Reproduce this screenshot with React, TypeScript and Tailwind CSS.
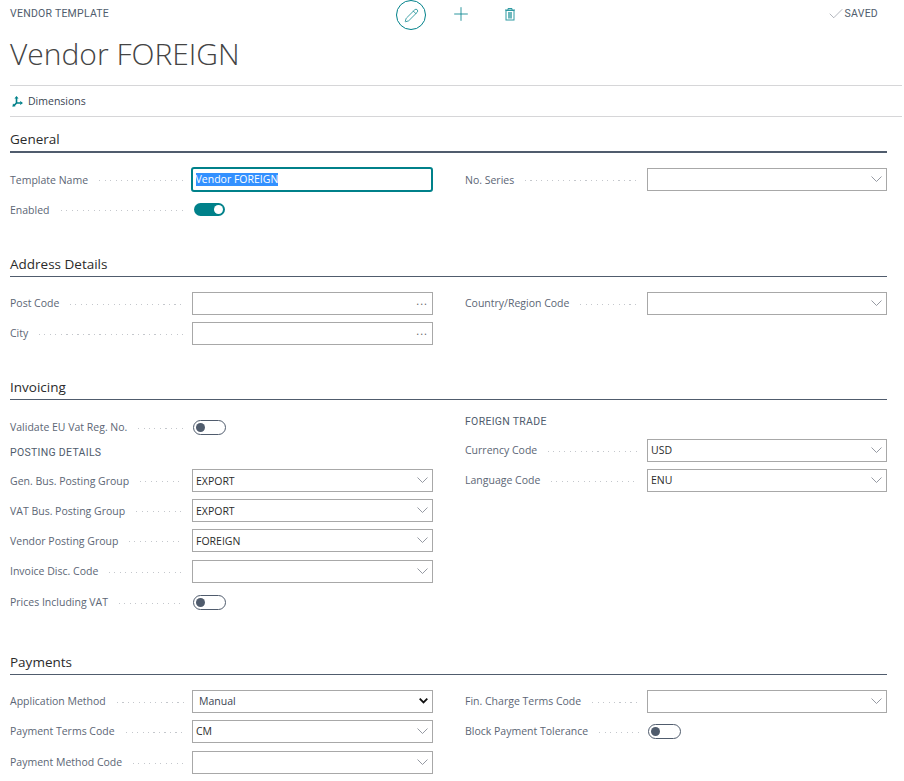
import React from "react";
import { Pencil, Plus, Check } from "lucide-react";

function Leader() {
  return <span className="flex-1 h-px ml-[11px] mr-[8px] mt-[3px] bg-[repeating-linear-gradient(90deg,#c4c7cc_0,#c4c7cc_1px,transparent_1px,transparent_5.5px)]" />;
}

function Row({ label, h = "h-[30px]", low, children }: { label: string; h?: string; low?: boolean; children: React.ReactNode }) {
  return (
    <div className={`flex items-center ${h}`}>
      <div className="flex items-center w-[182px] text-[#5c6675] whitespace-nowrap">
        <span className={low ? "pt-[4px]" : "pt-[2px]"}>{label}</span>
        <Leader />
      </div>
      {children}
    </div>
  );
}

function Thin() {
  return (
    <svg width="11" height="6" viewBox="0 0 11 6" fill="none">
      <path d="M0.5 0.5 5.5 5.5 10.5 0.5" stroke="#8a8f98" strokeWidth="0.9" />
    </svg>
  );
}

function Box({ value, kind, wide, low }: { value?: string; kind: "drop" | "more" | "none"; wide?: boolean; low?: boolean }) {
  return (
    <div className={`flex items-center justify-between h-[23px] border border-[#a8a8a8] pl-[3px] pr-[4px] text-[#2b2b2b] ${wide ? "w-[240px]" : "w-[241px]"}`}>
      <span className={low ? "pt-[4px]" : "pt-[2px]"}>{value}</span>
      {kind === "drop" && <Thin />}
      {kind === "more" && <span className="text-[#666] text-[11px] tracking-[1px] leading-none -mt-[5px]">...</span>}
    </div>
  );
}

function Toggle({ on }: { on?: boolean }) {
  return on ? (
    <div className="ml-[2px] flex items-center justify-end w-[31px] h-[13px] rounded-full bg-[#00818a] pr-[2px]">
      <span className="w-[9px] h-[9px] rounded-full bg-white" />
    </div>
  ) : (
    <div className="ml-[1px] flex items-center w-[33px] h-[15px] rounded-full border border-[#505c6d] pl-[2px] bg-white">
      <span className="w-[9px] h-[9px] rounded-full bg-[#505c6d]" />
    </div>
  );
}

function SectionTitle({ title, thick, mt }: { title: string; thick?: boolean; mt: string }) {
  return (
    <div className={`${mt} mr-[17px] flex items-end h-[26px] pb-[2px] text-[#2b2b2b] text-[13.5px] font-medium ${thick ? "border-b-2 border-[#505c6d]" : "border-b border-[#505c6d]"}`}>
      {title}
    </div>
  );
}

function SubHead({ children, h }: { children: React.ReactNode; h: string }) {
  return <div className={`flex items-center ${h} text-[10.5px] text-[#505c6d] tracking-[0.3px] [font-family:Roboto,sans-serif]`}>{children}</div>;
}

function Columns({ left, right }: { left: React.ReactNode; right: React.ReactNode }) {
  return (
    <div className="flex mr-[17px]">
      <div className="w-[423px] shrink-0">{left}</div>
      <div className="ml-[32px] flex-1">{right}</div>
    </div>
  );
}

export default function App() {
  return (
    <div className="w-[904px] h-[781px] overflow-hidden bg-white pl-[10px] pr-0 text-[10.5px] [font-family:'Open_Sans','Noto_Sans',sans-serif]">
      <div className="flex items-center h-[27px] mr-[26px] text-[#505c6d] [font-family:Roboto,sans-serif] text-[10.5px] tracking-[0.25px]">
        <span className="w-[386px]">VENDOR TEMPLATE</span>
        <span className="flex items-center justify-center w-[30px] h-[30px] mt-[3px] rounded-full border border-[#00818a] text-[#00818a]">
          <Pencil size={15} strokeWidth={1.2} />
        </span>
        <Plus size={22} strokeWidth={0.9} className="ml-[24px] text-[#00818a]" />
        <svg width="12" height="14" viewBox="0 0 12 14" className="ml-[32px]" fill="none">
          <path d="M1 3h10M4 3V1.5h4V3" stroke="#2e9aa2" strokeWidth="1" />
          <rect x="2" y="3.5" width="8" height="9.5" stroke="#2e9aa2" strokeWidth="1" />
          <rect x="4" y="5" width="4" height="6.5" fill="#6db8bd" />
        </svg>
        <span className="ml-auto flex items-center">
          <Check size={18} strokeWidth={0.7} className="text-[#6b7380]" />
          SAVED
        </span>
      </div>

      <div className="h-[58px] flex items-center text-[30px] leading-none font-light text-[#444] [font-family:'Open_Sans',sans-serif] pb-[4px]">
        Vendor FOREIGN
      </div>

      <div className="border-t border-b border-[#d6d6d8] mr-[2px] h-[32px] flex items-center gap-[5px] text-[#505c6d]">
        <svg width="11" height="11" viewBox="0 0 11 11" className="ml-[2px]" fill="none">
          <path d="M4.5 2v5.5M4.5 7h4M4.5 7 2 9.6" stroke="#00818a" strokeWidth="1.6" />
          <path d="M4.5 0 6.6 2.6H2.4ZM11 7 8.2 9V5ZM0.4 10.8l.6-3.2 2.6 2.6Z" fill="#00818a" />
        </svg>
        <span className="text-[#3a4452] pt-[1px]">Dimensions</span>
      </div>

      <SectionTitle title="General" thick mt="mt-[10px]" />
      <div className="mt-[11px]">
        <Columns
          left={
            <>
              <Row label="Template Name" low>
                <div className="flex items-center w-[243px] h-[25px] -ml-[1px] border-2 border-[#00818a] rounded-[3px] pl-[3px]">
                  <span className="bg-[#3390ff] text-white leading-[13px]">Vendor FOREIGN</span>
                </div>
              </Row>
              <Row label="Enabled" low><Toggle on /></Row>
            </>
          }
          right={<Row label="No. Series" low><Box kind="drop" wide /></Row>}
        />
      </div>

      <SectionTitle title="Address Details" mt="mt-[27px]" />
      <div className="mt-[11px]">
        <Columns
          left={
            <>
              <Row label="Post Code"><Box kind="more" /></Row>
              <Row label="City"><Box kind="more" /></Row>
            </>
          }
          right={<Row label="Country/Region Code"><Box kind="drop" wide /></Row>}
        />
      </div>

      <SectionTitle title="Invoicing" mt="mt-[26px]" />
      <div className="mt-[12px]">
        <Columns
          left={
            <>
              <Row label="Validate EU Vat Reg. No."><Toggle /></Row>
              <SubHead h="h-[23px] pb-[2px]">POSTING DETAILS</SubHead>
              <Row label="Gen. Bus. Posting Group" low><Box kind="drop" value="EXPORT" low /></Row>
              <Row label="VAT Bus. Posting Group" low><Box kind="drop" value="EXPORT" low /></Row>
              <Row label="Vendor Posting Group" low><Box kind="drop" value="FOREIGN" low /></Row>
              <Row label="Invoice Disc. Code" h="h-[30px] mt-[1px]"><Box kind="drop" /></Row>
              <Row label="Prices Including VAT" h="h-[30px] mt-[1px]"><Toggle /></Row>
            </>
          }
          right={
            <>
              <SubHead h="h-[20px] mb-[3px]">FOREIGN TRADE</SubHead>
              <Row label="Currency Code"><Box kind="drop" value="USD" wide /></Row>
              <Row label="Language Code"><Box kind="drop" value="ENU" wide /></Row>
            </>
          }
        />
      </div>

      <SectionTitle title="Payments" mt="mt-[32px]" />
      <div className="mt-[11px]">
        <Columns
          left={
            <>
              <Row label="Application Method">
                <div className="flex items-center justify-between w-[241px] h-[23px] border border-[#a8a8a8] pl-[6px] pr-[4px] text-[#3a4452]">
                  <span className="pt-[2px]">Manual</span>
                  <svg width="9" height="6" viewBox="0 0 9 6" fill="none">
                    <path d="M0.7 0.7 4.5 4.5 8.3 0.7" stroke="#111" strokeWidth="1.8" />
                  </svg>
                </div>
              </Row>
              <Row label="Payment Terms Code"><Box kind="drop" value="CM" /></Row>
              <Row label="Payment Method Code" h="h-[30px] mt-[1px]"><Box kind="drop" /></Row>
            </>
          }
          right={
            <>
              <Row label="Fin. Charge Terms Code"><Box kind="drop" wide /></Row>
              <Row label="Block Payment Tolerance"><Toggle /></Row>
            </>
          }
        />
      </div>
    </div>
  );
}
